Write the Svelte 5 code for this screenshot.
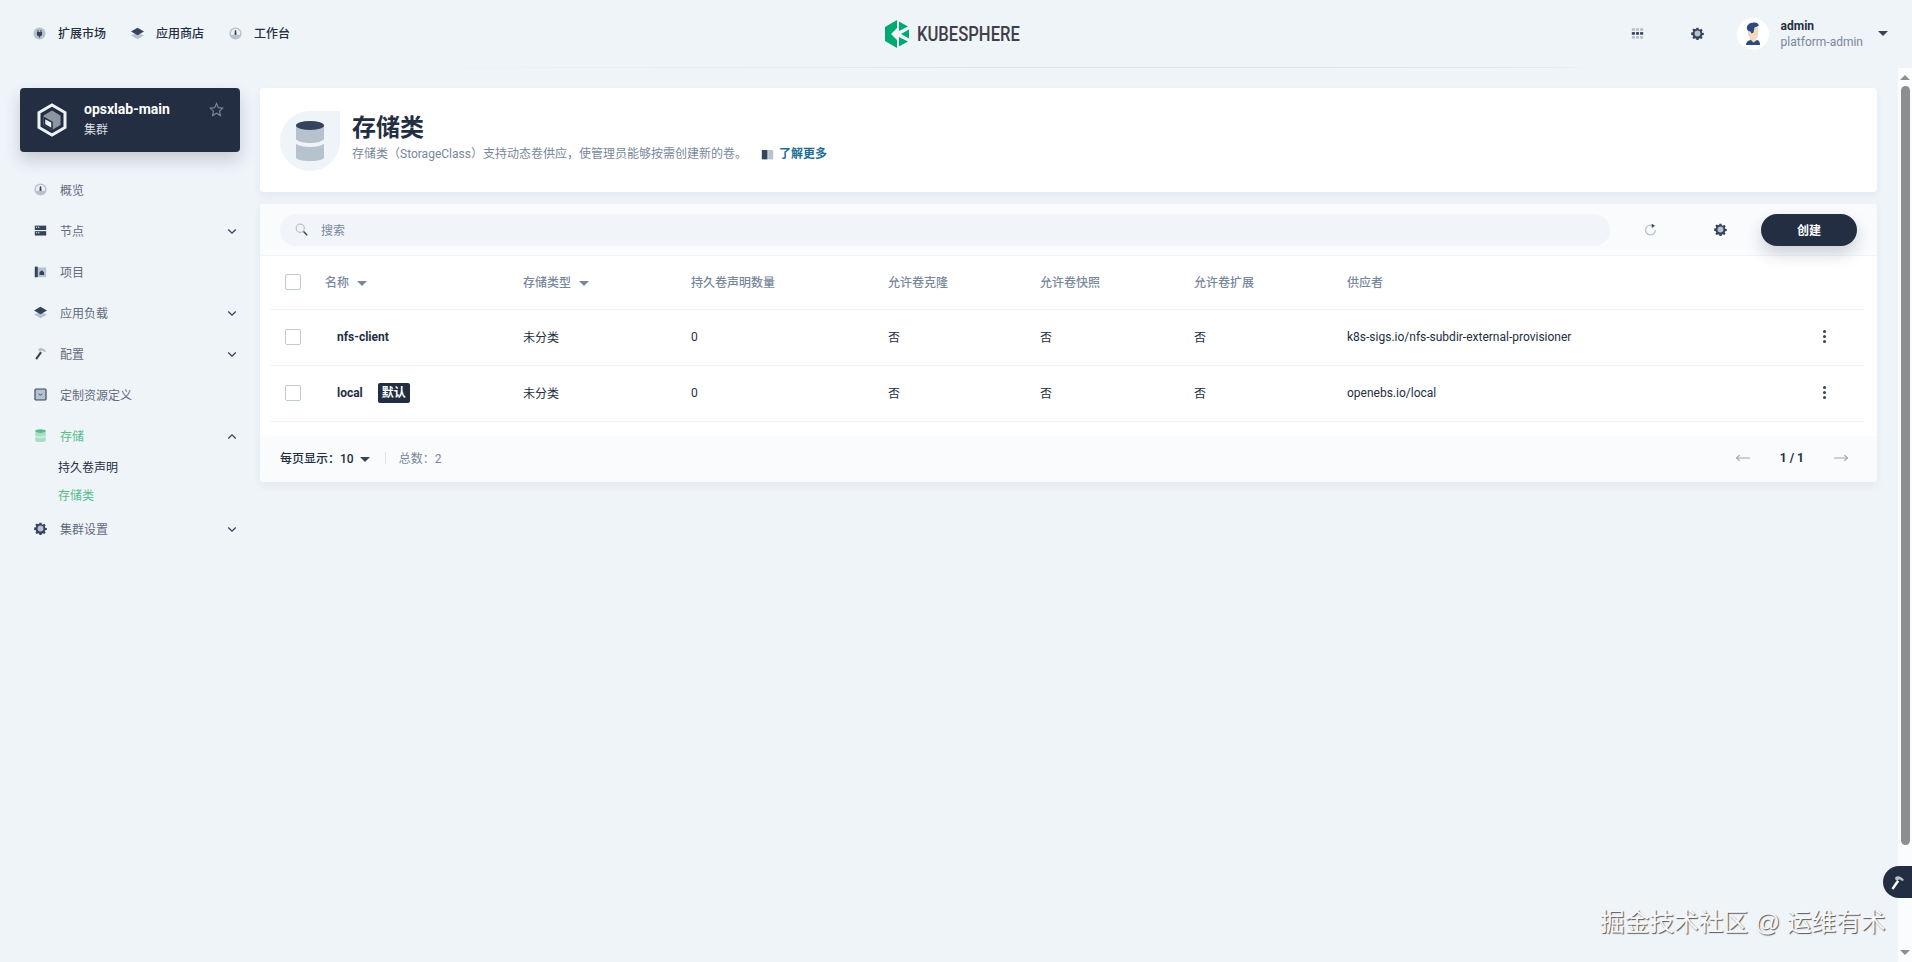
<script>
  const topLinks = [
    { icon: 'plug', label: '扩展市场' },
    { icon: 'layers', label: '应用商店' },
    { icon: 'gauge', label: '工作台' }
  ];

  const nav = [
    { icon: 'gauge', label: '概览' },
    { icon: 'nodes', label: '节点', arrow: 'down' },
    { icon: 'project', label: '项目' },
    { icon: 'layers', label: '应用负载', arrow: 'down' },
    { icon: 'hammer', label: '配置', arrow: 'down' },
    { icon: 'crd', label: '定制资源定义' },
    { icon: 'db', label: '存储', arrow: 'up', active: true, children: ['持久卷声明', '存储类'] },
    { icon: 'gear', label: '集群设置', arrow: 'down' }
  ];

  const columns = [
    { label: '名称', sort: true },
    { label: '存储类型', sort: true },
    { label: '持久卷声明数量' },
    { label: '允许卷克隆' },
    { label: '允许卷快照' },
    { label: '允许卷扩展' },
    { label: '供应者' }
  ];

  const rows = [
    { name: 'nfs-client', provisioner: 'k8s-sigs.io/nfs-subdir-external-provisioner' },
    { name: 'local', isDefault: true, provisioner: 'openebs.io/local' }
  ];
</script>

{#snippet icon(name)}
  <svg class="ico" viewBox="0 0 16 16" aria-hidden="true">
    {#if name === 'gauge'}
      <circle class="l" cx="8" cy="8" r="7.5" />
      <path class="w" d="M8 2.2a5.8 5.8 0 0 1 5.6 7.3H2.4A5.8 5.8 0 0 1 8 2.2z" />
      <path class="d" d="M7.2 4h1.6l.5 4.6a1.3 1.3 0 1 1-2.6 0z" />
    {:else if name === 'plug'}
      <circle class="l" cx="8" cy="8" r="7.5" />
      <path class="d" d="M5.6 3.8h1.2v2.4h2.4V3.8h1.2v2.4h.8v2.6a2.6 2.6 0 0 1-2.4 2.5V13H7.2v-1.7a2.6 2.6 0 0 1-2.4-2.5V6.2h.8z" />
    {:else if name === 'layers'}
      <path class="l" d="M8 7 16 10.6 8 15 0 10.6z" />
      <path class="d" d="M8 1 16 5.6 8 10.2 0 5.6z" />
    {:else if name === 'nodes'}
      <rect class="d" x="1" y="2" width="14" height="5.4" />
      <rect class="d" x="1" y="8.8" width="14" height="5.4" />
      <rect class="w" x="2.4" y="3.4" width="1.6" height="1.2" />
      <rect class="w" x="5" y="3.4" width="1.6" height="1.2" />
      <rect class="w" x="2.4" y="10.2" width="1.6" height="1.2" />
      <rect class="w" x="5" y="10.2" width="1.6" height="1.2" />
    {:else if name === 'project'}
      <rect class="l" x="1" y="3" width="14" height="12" />
      <rect class="d" x="1" y="2" width="3.6" height="13" />
      <path class="d" d="M9.6 6.4 12.4 9v3.4H6.8V9z" />
    {:else if name === 'hammer'}
      <path class="d" d="M7.6 5.4 9.8 7 3.6 15.6 1.6 14.2z" />
      <path class="l" d="M5.8 2.2C8.4.4 11.4 1 15 5.2l-2 1.2c-1.6-1.4-2.8-2-4-1.4L8 6.4 5.4 4.4z" />
    {:else if name === 'crd'}
      <rect class="l" x="1.2" y="1.2" width="13.6" height="13.6" rx="1.4" />
      <rect class="o" x="1.2" y="1.2" width="13.6" height="13.6" rx="1.4" />
      <path class="n" d="M6 7l2 2 2-2" />
    {:else if name === 'db'}
      <path class="l" d="M1.5 9.4c1.6 1 4 1.4 6.5 1.4s4.900-.4 6.500-1.400V14c0 1.200-3 2-6.500 2s-6.500-.8-6.500-2z" />
      <path class="l" d="M1.500 3c0 1.200 3 2 6.500 2s6.500-.8 6.500-2v5.200c-1.600 1-4 1.400-6.500 1.400s-4.900-.4-6.500-1.400z" />
      <ellipse class="d" cx="8" cy="2.600" rx="6.500" ry="2.400" />
    {:else if name === 'gear'}
      <path class="d" d="M6.800.8h2.400l.4 2 1.300.6 1.700-1.100 1.700 1.700-1.100 1.700.6 1.300 2 .4v2.400l-2 .4-.6 1.300 1.100 1.700-1.700 1.700-1.700-1.100-1.300.6-.4 2H6.800l-.4-2-1.300-.6-1.700 1.100-1.700-1.700 1.100-1.700-.6-1.300-2-.4V6.800l2-.4.6-1.300-1.100-1.700 1.700-1.700 1.700 1.100 1.300-.6z" />
      <circle class="l" cx="8" cy="8" r="3.600" />
    {:else if name === 'grid'}
      <rect class="l" x="1" y="1.500" width="3.800" height="3.200" />
      <rect class="l" x="6.100" y="1.500" width="3.800" height="3.200" />
      <rect class="l" x="11.200" y="1.500" width="3.800" height="3.200" />
      <rect class="d" x="1" y="6.300" width="3.800" height="3.200" />
      <rect class="d" x="6.100" y="6.300" width="3.800" height="3.200" />
      <rect class="d" x="11.200" y="6.300" width="3.800" height="3.200" />
      <rect class="l" x="1" y="11.200" width="3.800" height="3.200" />
      <rect class="l" x="6.100" y="11.200" width="3.800" height="3.200" />
      <rect class="l" x="11.200" y="11.200" width="3.800" height="3.200" />
    {:else if name === 'refresh'}
      <path class="r" d="M11 3.500A6 6 0 1 0 14 8.500" />
      <path class="d" d="M9.500 1 13.500 3.500 9.500 6z" />
    {:else if name === 'search'}
      <circle class="s" cx="6.500" cy="6.500" r="5" />
      <path class="t" d="M10.500 10.500 15 15" />
    {:else if name === 'book'}
      <rect class="d" x="1" y="2.500" width="7" height="11.500" />
      <rect class="l" x="8.800" y="2.500" width="6.200" height="11.500" />
    {/if}
  </svg>
{/snippet}

{#snippet chevron(dir)}
  <svg class="chev" class:up={dir === 'up'} viewBox="0 0 12 8" aria-hidden="true">
    <path d="M1.500 1.500 6 6l4.500-4.500" />
  </svg>
{/snippet}

<div class="app">
  <header class="topbar">
    <nav class="top-links">
      {#each topLinks as link (link.label)}
        <span class="top-link">{@render icon(link.icon)}{link.label}</span>
      {/each}
    </nav>

    <div class="brand">
      <svg class="brand-mark" viewBox="0 0 24 28" aria-hidden="true">
        <polygon points="12,0 0,7 0,21 12,28 12,20 6,14 12,8" />
        <polygon points="14,1.500 23,6.500 14,11" />
        <polygon points="14,26.500 23,21.500 14,17" />
        <polygon points="16,14 24,9.500 24,18.500" />
      </svg>
      <span class="brand-name">KUBESPHERE</span>
    </div>

    <div class="top-right">
      <span class="top-tool">{@render icon('grid')}</span>
      <span class="top-tool">{@render icon('gear')}</span>
      <span class="avatar">
        <svg viewBox="0 0 32 32" aria-hidden="true">
          <path fill="#f3d9c0" d="M11 9h10v9l-2 3v3h-6v-3l-2-4z" />
          <path fill="#2b4a7d" d="M10 11c-1-4 3-7 8-6.500 3 .2 4 2 3.500 3.500l-4 1.500-1 5-2 1-1-2c-2 0-3-1-3.500-2.500z" />
          <path fill="#2b4a7d" d="M9 27c0-3 2-4.500 5-5l2.500 2.500L20 22c2 .6 3 2 3 5z" />
        </svg>
      </span>
      <div class="user">
        <strong>admin</strong>
        <span>platform-admin</span>
      </div>
      <i class="caret dark"></i>
    </div>
  </header>
  <div class="top-rule"></div>

  <div class="body">
    <aside class="sidebar">
      <div class="cluster">
        <svg class="cluster-mark" viewBox="0 0 30 34" aria-hidden="true">
          <path fill="none" stroke="#eef2f6" stroke-width="3" d="M15 2 28 9.500v15L15 32 2 24.500v-15z" />
          <path fill="#8d95a3" d="M15 7.500 23.500 12.500v9.500L15 27l-8.500-5v-9.500z" />
          <path fill="#eef2f6" stroke="#242e42" stroke-width="1.500" d="M7.500 15 15 19.200V26l-7.500-4.300z" />
        </svg>
        <div class="cluster-text">
          <strong>opsxlab-main</strong>
          <span>集群</span>
        </div>
        <svg class="star" viewBox="0 0 16 16" aria-hidden="true">
          <path d="M8 1.500 10 6l4.800.5-3.600 3.200 1 4.800L8 12l-4.200 2.500 1-4.800L1.200 6.500 6 6z" />
        </svg>
      </div>

      <ul class="menu">
        {#each nav as item (item.label)}
          <li>
            <div class="menu-item" class:active={item.active}>
              {@render icon(item.icon)}
              <span class="menu-label">{item.label}</span>
              {#if item.arrow}{@render chevron(item.arrow)}{/if}
            </div>
            {#if item.children}
              <ul class="submenu">
                {#each item.children as child, i (child)}
                  <li class:selected={i === 1}>{child}</li>
                {/each}
              </ul>
            {/if}
          </li>
        {/each}
      </ul>
    </aside>

    <main class="content">
      <section class="page-head">
        <div class="page-icon">
          <svg viewBox="0 0 28 40" aria-hidden="true">
            <path fill="#b6c2cd" d="M0 4c0 3 6 5 14 5s14-2 14-5v14.500c-3 2.500-8.500 3.500-14 3.500S3 21 0 18.500z" />
            <path fill="#b6c2cd" d="M0 23c3 2 8.500 3 14 3s11-1 14-3v13.500c0 2-6 3.500-14 3.500S0 38.500 0 36.500z" />
            <ellipse fill="#36435c" cx="14" cy="4.500" rx="14" ry="4.500" />
          </svg>
        </div>
        <div class="page-text">
          <h1>存储类</h1>
          <p>
            存储类（StorageClass）支持动态卷供应，使管理员能够按需创建新的卷。
            <span class="learn">{@render icon('book')}<b>了解更多</b></span>
          </p>
        </div>
      </section>

      <section class="panel">
        <div class="toolbar">
          <div class="search">{@render icon('search')}<span>搜索</span></div>
          <span class="tool first">{@render icon('refresh')}</span>
          <span class="tool">{@render icon('gear')}</span>
          <button class="create">创建</button>
        </div>

        <div class="table">
          <div class="row head">
            <span class="check"></span>
            {#each columns as col (col.label)}
              <span class="cell">
                {col.label}
                {#if col.sort}<i class="caret"></i>{/if}
              </span>
            {/each}
          </div>
          {#each rows as row (row.name)}
            <div class="row">
              <span class="check"></span>
              <span class="cell name">
                <b>{row.name}</b>
                {#if row.isDefault}<em class="badge">默认</em>{/if}
              </span>
              <span class="cell">未分类</span>
              <span class="cell">0</span>
              <span class="cell">否</span>
              <span class="cell">否</span>
              <span class="cell">否</span>
              <span class="cell">{row.provisioner}</span>
              <span class="kebab"><i></i><i></i><i></i></span>
            </div>
          {/each}
        </div>

        <footer class="pager">
          <span class="per-page">每页显示：10 <i class="caret dark"></i></span>
          <span class="sep"></span>
          <span class="total">总数：2</span>
          <span class="pages">
            <svg class="arrow" viewBox="0 0 16 8" aria-hidden="true"><path d="M16 4H2M5 1 1.500 4 5 7" /></svg>
            <b>1 / 1</b>
            <svg class="arrow" viewBox="0 0 16 8" aria-hidden="true"><path d="M0 4h14M11 1l3.500 3L11 7" /></svg>
          </span>
        </footer>
      </section>
    </main>

    <div class="scrollbar" aria-hidden="true">
      <i class="sb-up"></i>
      <i class="sb-thumb"></i>
      <i class="sb-down"></i>
    </div>
  </div>

  <button class="tool-float" aria-label="工具">
    <svg viewBox="0 0 16 16" aria-hidden="true">
      <path fill="#fff" d="M7.600 5.400 9.800 7 3.600 15.600 1.600 14.200z" />
      <path fill="#b6c2cd" d="M5.800 2.200C8.400.4 11.400 1 15 5.200l-2 1.200c-1.600-1.400-2.800-2-4-1.400L8 6.400 5.400 4.400z" />
    </svg>
  </button>
  <div class="watermark">掘金技术社区 @ 运维有术</div>
</div>

<style>
  :global(body) {
    margin: 0;
    background: #eff4f9;
    font-family: Roboto, "Noto Sans CJK SC", sans-serif;
    font-size: 12px;
    color: #242e42;
  }

  .app {
    position: relative;
    height: 962px;
    overflow: hidden;
    display: flex;
    flex-direction: column;
    background: #eff4f9;
  }

  /* duotone icons */
  .ico {
    width: 13px;
    height: 13px;
    flex: none;
    display: block;
  }
  .d { fill: #36435c; }
  .l { fill: #b6c2cd; }
  .w { fill: #eef2f6; }
  .o { fill: none; stroke: #36435c; stroke-width: 1.4; }
  .n { fill: none; stroke: #36435c; stroke-width: 1.200; }
  .r { fill: none; stroke: #b6c2cd; stroke-width: 1.600; }
  .s { fill: none; stroke: #b6c2cd; stroke-width: 1.500; }
  .t { fill: none; stroke: #36435c; stroke-width: 1.800; }

  .caret {
    display: inline-block;
    width: 0;
    height: 0;
    border-left: 5px solid transparent;
    border-right: 5px solid transparent;
    border-top: 5px solid #79879c;
    margin-left: 5px;
    vertical-align: 1px;
  }
  .caret.dark { border-top-color: #36435c; }

  .topbar {
    height: 67px;
    flex: none;
    display: grid;
    grid-template-columns: 1fr auto 1fr;
    align-items: center;
    padding: 0 24px 0 33px;
  }

  .top-links {
    display: flex;
    gap: 25px;
  }

  .top-link {
    display: flex;
    align-items: center;
    gap: 12px;
    font-weight: 500;
    line-height: 16px;
  }

  .brand {
    display: flex;
    align-items: center;
    gap: 8px;
    width: 136px;
    transform: translateX(-8px);
  }

  .brand-mark {
    width: 24px;
    height: 28px;
    fill: #00a971;
    flex: none;
  }

  .brand-name {
    font-size: 20px;
    font-weight: 500;
    color: #3f3e49;
    display: inline-block;
    transform: scaleX(0.83);
    transform-origin: left center;
    white-space: nowrap;
  }

  .top-right {
    display: flex;
    align-items: center;
    justify-content: flex-end;
  }

  .top-tool {
    width: 60px;
    display: flex;
    justify-content: center;
  }

  .avatar {
    width: 32px;
    height: 32px;
    border-radius: 50%;
    background: #fff;
    margin-left: 9px;
  }
  .avatar svg {
    display: block;
    width: 32px;
    height: 32px;
  }

  .user {
    display: flex;
    flex-direction: column;
    margin-left: 12px;
    line-height: 16px;
  }
  .user strong { font-weight: 700; }
  .user span { color: #79879c; }

  .top-right .caret { margin-left: 15px; }

  .top-rule {
    height: 1px;
    flex: none;
    margin: 0 322px 0 360px;
    background: linear-gradient(90deg, transparent, #e3e9ef 40%, #dde4eb 60%, #e3e9ef 97%, transparent);
  }

  .body {
    flex: 1;
    min-height: 0;
    display: flex;
  }

  .sidebar {
    width: 220px;
    flex: none;
    padding: 20px 20px 0;
  }

  .cluster {
    height: 64px;
    box-sizing: border-box;
    padding: 0 16px 0 17px;
    display: flex;
    align-items: center;
    border-radius: 4px;
    background: #242e42;
    box-shadow: 0 8px 16px rgba(36, 46, 66, 0.2);
  }

  .cluster-mark {
    width: 30px;
    height: 34px;
    flex: none;
  }

  .cluster-text {
    flex: 1;
    margin: -3px 0 0 17px;
    display: flex;
    flex-direction: column;
    gap: 3px;
  }
  .cluster-text strong {
    font-size: 14px;
    line-height: 20px;
    font-weight: 700;
    color: #fff;
  }
  .cluster-text span {
    line-height: 16px;
    color: #d8dee5;
  }

  .star {
    width: 15px;
    height: 15px;
    margin-top: -22px;
    fill: none;
    stroke: #79879c;
    stroke-width: 1.200;
  }

  .menu, .submenu {
    list-style: none;
    margin: 0;
    padding: 0;
  }
  .menu { margin-top: 16.500px; }

  .menu-item {
    height: 41px;
    display: flex;
    align-items: center;
    padding: 0 3px 0 14px;
    color: #5f6b80;
  }

  .menu-label {
    flex: 1;
    margin-left: 13px;
  }

  .menu-item.active { color: #55bc8a; }
  .menu-item.active .d { fill: #55bc8a; }
  .menu-item.active .l { fill: #a5e0c4; }

  .chev {
    width: 10px;
    height: 7px;
    fill: none;
    stroke: #36435c;
    stroke-width: 1.600;
    margin-top: 3px;
  }
  .chev.up { transform: rotate(180deg); }

  .submenu {
    margin: -2px 0 -2px;
    padding-left: 38px;
  }
  .submenu li {
    height: 28px;
    line-height: 28px;
    color: #242e42;
  }
  .submenu li.selected { color: #55bc8a; }

  .content {
    width: 1617px;
    flex: none;
    padding-top: 20px;
    display: flex;
    flex-direction: column;
    gap: 12px;
  }

  .page-head {
    height: 104px;
    box-sizing: border-box;
    padding: 23px 20px 0;
    display: flex;
    gap: 12px;
    background: #fff;
    border-radius: 4px;
    box-shadow: 0 4px 8px rgba(36, 46, 66, 0.06);
  }

  .page-icon {
    width: 60px;
    height: 60px;
    box-sizing: border-box;
    padding: 10px 16px;
    background: #eff4f9;
    border-radius: 50% 0 50% 50%;
  }
  .page-icon svg {
    display: block;
    width: 28px;
    height: 40px;
  }

  .page-text h1 {
    margin: 1px 0 0;
    font-size: 24px;
    line-height: 32px;
    font-weight: 700;
  }
  .page-text p {
    margin: 0;
    line-height: 20px;
    color: #79879c;
    display: flex;
    align-items: center;
  }

  .learn {
    display: inline-flex;
    align-items: center;
    gap: 4px;
    margin-left: 13px;
    color: #1c6e94;
  }
  .learn .ico { width: 15px; }
  .learn b { font-weight: 700; }

  .panel {
    border-radius: 4px;
    background: #fff;
    box-shadow: 0 4px 8px rgba(36, 46, 66, 0.06);
    overflow: hidden;
  }

  .toolbar {
    height: 52px;
    box-sizing: border-box;
    padding: 10px 20px;
    display: flex;
    background: #f9fbfd;
    border-bottom: 1px solid #f1f5f9;
  }

  .search {
    width: 1330px;
    height: 32px;
    box-sizing: border-box;
    padding: 0 0 1px 15px;
    display: flex;
    align-items: center;
    gap: 13px;
    border-radius: 16px;
    background: #f1f5f9;
    color: #79879c;
  }

  .tool {
    width: 70px;
    display: flex;
    align-items: center;
    justify-content: center;
  }
  .tool.first { margin-left: 5px; }

  .create {
    width: 96px;
    height: 32px;
    margin-left: 6px;
    padding: 0 0 2px;
    border: 0;
    border-radius: 16px;
    background: #242e42;
    color: #fff;
    font: 700 12px Roboto, "Noto Sans CJK SC", sans-serif;
    box-shadow: 0 8px 16px rgba(36, 46, 66, 0.2);
  }

  .table {
    height: 180px;
  }

  .row {
    height: 56px;
    margin: 0 13px 0 10px;
    padding: 0 0 2px 15px;
    display: grid;
    grid-template-columns: 40px 198px 168px 197px 152px 154px 153px 476px 1fr;
    align-items: center;
    box-sizing: border-box;
    border-bottom: 1px solid #eff4f9;
  }
  .row.head {
    height: 54px;
    color: #79879c;
    font-weight: 500;
  }

  .check {
    width: 16px;
    height: 16px;
    box-sizing: border-box;
    border: 1px solid #c1c9d1;
    border-radius: 2px;
    background: #fff;
  }

  .name {
    padding-left: 12px;
    display: flex;
    align-items: center;
    gap: 15px;
  }
  .name b { font-weight: 700; }

  .badge {
    font-style: normal;
    font-weight: 700;
    color: #fff;
    background: #242e42;
    border-radius: 2px;
    width: 32px;
    height: 20px;
    line-height: 20px;
    text-align: center;
  }

  .kebab {
    display: flex;
    flex-direction: column;
    gap: 2px;
    width: 3px;
    justify-self: start;
  }
  .kebab i {
    width: 3px;
    height: 3px;
    border-radius: 50%;
    background: #36435c;
  }

  .pager {
    height: 46px;
    box-sizing: border-box;
    padding: 0 28px 3px 20px;
    display: flex;
    align-items: center;
    background: #f9fbfd;
  }

  .per-page {
    font-weight: 500;
  }
  .per-page .caret { margin-left: 3px; }

  .sep {
    width: 1px;
    height: 12px;
    margin: 0 13px 0 15px;
    background: #dde4eb;
  }

  .total { color: #79879c; }

  .pages {
    margin-left: auto;
    display: flex;
    align-items: center;
    gap: 30px;
  }
  .pages b { font-weight: 700; }

  .arrow {
    width: 15px;
    height: 8px;
    fill: none;
    stroke: #9aa6b5;
    stroke-width: 1.100;
  }

  .scrollbar {
    width: 14px;
    margin-left: 21px;
    display: flex;
    flex-direction: column;
    align-items: center;
    justify-content: space-between;
    background: #fbfcfd;
  }

  .sb-up, .sb-down {
    width: 0;
    height: 0;
    margin: 6px 0;
    border-left: 5px solid transparent;
    border-right: 5px solid transparent;
  }
  .sb-up { border-bottom: 5px solid #8e8e8e; margin-top: 7px; }
  .sb-down { border-top: 5px solid #8e8e8e; margin-bottom: 7px; }

  .sb-thumb {
    width: 9px;
    height: 759px;
    margin-bottom: 99px;
    margin-top: -1px;
    border-radius: 5px;
    background: #8e8e8e;
  }

  .tool-float {
    position: absolute;
    right: 0;
    top: 866px;
    width: 29px;
    height: 32px;
    padding: 0 0 0 7px;
    border: 0;
    border-radius: 16px 0 0 16px;
    background: #242e42;
  }
  .tool-float svg {
    display: block;
    width: 15px;
    height: 15px;
  }

  .watermark {
    position: absolute;
    left: 1600px;
    top: 907px;
    white-space: nowrap;
    font-family: "Liberation Sans", "Noto Sans CJK SC", sans-serif;
    font-size: 24.700px;
    line-height: 32px;
    color: #f6f7f8;
    text-shadow: 1px 1px 1px rgba(0, 0, 0, 0.65);
  }
</style>
